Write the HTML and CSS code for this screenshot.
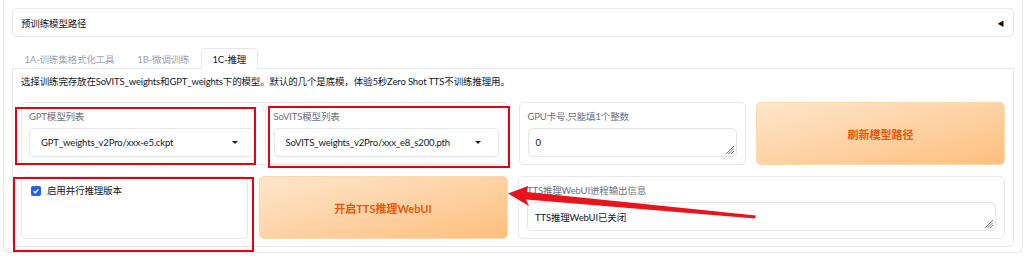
FILE: index.html
```html
<!DOCTYPE html>
<html lang="zh-CN">
    <head>
        <meta charset="UTF-8">
        <meta name="viewport" content="width=device-width, initial-scale=1.0">
        <title>GPT-SoVITS WebUI</title>
        <link rel="stylesheet" href="styles.css">
    </head>
    <body>
        <div class="app">
            <div class="accordion">
                <span>预训练模型路径</span>
                <span class="accordion-icon">◀</span>
            </div>

            <div class="tabs">
                <div class="tab-nav">
                    <button class="tab">1A-训练集格式化工具</button>
                    <button class="tab">1B-微调训练</button>
                    <button class="tab selected">1C-推理</button>
                </div>

                <div class="tab-panel">
                    <p class="note">选择训练完存放在SoVITS_weights和GPT_weights下的模型。默认的几个是底模，体验5秒Zero Shot TTS不训练推理用。</p>

                    <div class="row row-top">
                        <div class="block group">
                            <div class="field">
                                <span class="label">GPT模型列表</span>
                                <div class="dropdown">
                                    <span>GPT_weights_v2Pro/xxx-e5.ckpt</span>
                                    <span class="caret"></span>
                                </div>
                            </div>
                            <div class="field divided">
                                <span class="label">SoVITS模型列表</span>
                                <div class="dropdown">
                                    <span>SoVITS_weights_v2Pro/xxx_e8_s200.pth</span>
                                    <span class="caret"></span>
                                </div>
                            </div>
                        </div>

                        <div class="block field">
                            <span class="label">GPU卡号,只能填1个整数</span>
                            <div class="textbox">
                                <span>0</span>
                                <svg class="grip" width="8" height="8" viewBox="0 0 8 8">
                                    <path d="M8 0 L0 8 M8 2.5 L2.5 8 M8 5 L5 8" stroke="#555" stroke-width="0.8"/>
                                </svg>
                            </div>
                        </div>

                        <button class="action">刷新模型路径</button>
                    </div>

                    <div class="row row-bottom">
                        <div class="block field">
                            <label class="check">
                                <span class="box">
                                    <svg width="8" height="8" viewBox="0 0 8 8">
                                        <path d="M1.6 4.2 L3.3 5.8 L6.4 2.4" fill="none" stroke="#fff" stroke-width="1.3"/>
                                    </svg>
                                </span>
                                启用并行推理版本
                            </label>
                        </div>

                        <button class="action">开启TTS推理WebUI</button>

                        <div class="block field">
                            <span class="label">TTS推理WebUI进程输出信息</span>
                            <div class="textbox">
                                <span>TTS推理WebUI已关闭</span>
                                <svg class="grip" width="8" height="8" viewBox="0 0 8 8">
                                    <path d="M8 0 L0 8 M8 2.5 L2.5 8 M8 5 L5 8" stroke="#555" stroke-width="0.8"/>
                                </svg>
                            </div>
                        </div>
                    </div>
                </div>
            </div>
        </div>

        <!-- red annotations drawn on top of the screenshot -->
        <div class="mark mark-gpt"></div>
        <div class="mark mark-sovits"></div>
        <div class="mark mark-check"></div>
        <svg class="arrow" width="1035" height="267" viewBox="0 0 1035 267">
            <polygon points="508,193.5 528,186 527,192 756,215.5 755,218.5 526,199.5 529,206" fill="#e8141c"/>
        </svg>
    </body>
</html>
```

FILE: styles.css
```css
body {
    margin: 0;
    background-color: #fff;
    color: #1f2937;
    font-family: Lato, "Noto Sans CJK SC", sans-serif;
    font-size: 9.5px;
    letter-spacing: -0.15px;
    position: relative;
    height: 267px;
    overflow: hidden;
}
.app {
    margin-left: 3px;
    width: 1020px;
    box-sizing: border-box;
    padding: 8px 8px 5px 8px;
    border: 1px solid #e5e7eb;
    border-top: none;
    border-radius: 0 0 6px 6px;
}
.accordion {
    height: 29px;
    box-sizing: border-box;
    display: flex;
    align-items: center;
    justify-content: space-between;
    padding: 0 9px 0 8px;
    border: 1px solid #e5e7eb;
    border-radius: 5px;
    color: #111827;
}
.accordion-icon {
    font-size: 7px;
    color: #111;
}
.tabs {
    margin-top: 11px;
}
.tab-nav {
    display: flex;
    height: 20px;
    padding-left: 1px;
}
.tab {
    border: 1px solid transparent;
    border-bottom: none;
    background: none;
    padding: 0 10.5px;
    margin: 0;
    font: inherit;
    letter-spacing: inherit;
    color: #9ca3af;
    height: 21px;
    border-radius: 5px 5px 0 0;
}
.tab.selected {
    color: #111827;
    border-color: #e5e7eb;
    background-color: #fff;
    position: relative;
    z-index: 1;
}
.tab-panel {
    border: 1px solid #e5e7eb;
    border-radius: 0 0 5px 5px;
    padding: 6px 8px 7px 8px;
}
.note {
    margin: 0 0 13px 0;
    line-height: 14px;
    color: #111827;
}
.row {
    display: grid;
    height: 63px;
    column-gap: 10.5px;
}
.row-top {
    grid-template-columns: 487fr 227fr 249fr;
}
.row-bottom {
    margin-top: 11px;
    grid-template-columns: 227fr 249fr 487fr;
}
.block {
    border: 1px solid #e5e7eb;
    border-radius: 5px;
    box-sizing: border-box;
}
.group {
    display: grid;
    grid-template-columns: 1fr 1fr;
}
.field {
    display: flex;
    flex-direction: column;
    padding: 7px 8px 7px 8px;
    box-sizing: border-box;
}
.group .field:first-child {
    padding-left: 7px;
    padding-right: 9px;
}
.divided {
    border-left: 1px solid #e5e7eb;
}
.label {
    line-height: 14px;
    color: #6b7280;
    margin-bottom: 4px;
}
.dropdown,
.textbox {
    height: 29px;
    box-sizing: border-box;
    border: 1px solid #e5e7eb;
    border-radius: 5px;
    box-shadow: inset 0 1px 2px rgba(0,0,0,0.04);
    display: flex;
    align-items: center;
    position: relative;
    color: #111827;
}
.dropdown {
    justify-content: space-between;
    padding: 0 17px 0 11px;
    box-shadow: 0 1px 2px rgba(0,0,0,0.05);
}
.caret {
    width: 0;
    height: 0;
    border-left: 3px solid transparent;
    border-right: 3px solid transparent;
    border-top: 3.5px solid #222;
}
.textbox {
    padding: 0 7px;
}
.grip {
    position: absolute;
    right: 2px;
    bottom: 2px;
}
.action {
    border: 1px solid #fed7aa;
    border-radius: 5px;
    background: linear-gradient(to bottom right, #fee6cc, #fdbf7e);
    color: #ea580c;
    font: inherit;
    font-size: 11px;
    font-weight: 700;
    letter-spacing: 0;
    padding: 0;
}
.check {
    display: flex;
    align-items: center;
    gap: 6px;
    line-height: 14px;
    color: #111827;
    padding-left: 1px;
}
.box {
    width: 10px;
    height: 10px;
    border-radius: 2px;
    background-color: #2563eb;
    display: flex;
    align-items: center;
    justify-content: center;
}
.mark {
    position: absolute;
    border: 2px solid #e60012;
    box-sizing: border-box;
}
.mark-gpt {
    left: 15px;
    top: 107px;
    width: 241px;
    height: 58px;
}
.mark-sovits {
    left: 268px;
    top: 106px;
    width: 242px;
    height: 62px;
}
.mark-check {
    left: 13px;
    top: 177px;
    width: 241px;
    height: 75px;
}
.arrow {
    position: absolute;
    left: 0;
    top: 0;
    pointer-events: none;
}
```
